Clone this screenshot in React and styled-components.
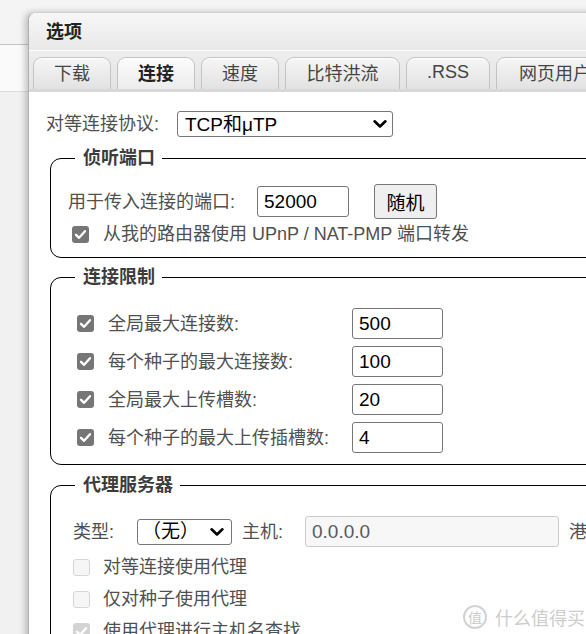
import React from "react";
import styled, { createGlobalStyle } from "styled-components";

const GlobalStyle = createGlobalStyle`
  html, body {
    margin: 0;
    padding: 0;
  }
  body {
    font-family: "Liberation Sans", "Noto Sans CJK SC", sans-serif;
    background: #f3f3f3;
  }
`;

const Page = styled.div`
  position: relative;
  width: 586px;
  height: 634px;
  overflow: hidden;
  box-sizing: border-box;
  padding: 12px 0 0 28px;
  background: linear-gradient(
      to bottom,
      #f4f4f4 44px,
      #c4c4c4 44px,
      #c4c4c4 45px,
      #fafafa 45px,
      #fafafa 91px,
      #dcdcdc 91px,
      #dcdcdc 92px,
      #f1f1f1 92px
    );
`;

const Dialog = styled.div`
  width: 620px;
  height: 700px;
  background: #fff;
  border-left: 1px solid #b0b0b0;
  border-top: 1px solid #cfcfcf;
  border-top-left-radius: 8px;
  box-shadow: -3px 0 6px rgba(0, 0, 0, 0.22);
  overflow: hidden;
`;

const TitleBar = styled.div`
  height: 38px;
  box-sizing: border-box;
  display: flex;
  align-items: center;
  padding: 0 0 4px 17px;
  background: linear-gradient(to bottom, #f7f7f7, #e8e8e8);
  border-bottom: 1px solid #fff;
  font-size: 18px;
  font-weight: bold;
  color: #222;
`;

const TabStrip = styled.div`
  height: 32px;
  display: flex;
  align-items: flex-end;
  gap: 6px;
  padding: 6px 0 0 4px;
  background: linear-gradient(to bottom, #eeeeee, #e3e3e3);
  border-bottom: 3px solid #d8d8d8;
`;

const Tab = styled.div`
  flex: none;
  width: ${(p) => p.$w}px;
  height: 32px;
  box-sizing: border-box;
  display: flex;
  align-items: center;
  justify-content: center;
  padding-bottom: 3px;
  border: 1px solid #c3c3c3;
  border-bottom: none;
  border-radius: 9px 9px 0 0;
  background: ${(p) =>
    p.$active
      ? "linear-gradient(to bottom, #fcfcfc, #ececec)"
      : "linear-gradient(to bottom, #f6f6f6, #e2e2e2)"};
  box-shadow: inset 0 1px 0 #fff;
  font-size: 18px;
  font-weight: ${(p) => (p.$active ? "bold" : "normal")};
  color: ${(p) => (p.$active ? "#222" : "#444")};
  white-space: nowrap;
  overflow: hidden;
`;

const Content = styled.div`
  padding: 19px 0 0 17px;
`;

const Row = styled.div`
  display: flex;
  align-items: center;
  height: ${(p) => p.$h || 31}px;
  margin-top: ${(p) => p.$mt || 0}px;
  padding-left: ${(p) => p.$pl || 0}px;
`;

const Label = styled.span`
  flex: none;
  width: ${(p) => (p.$w ? `${p.$w}px` : "auto")};
  font-size: 18px;
  line-height: 22px;
  color: #505050;
  white-space: nowrap;
`;

const SelectWrap = styled.span`
  position: relative;
  flex: none;
  display: inline-block;
  width: ${(p) => p.$w}px;
  height: 26px;
  margin-right: ${(p) => p.$mr || 0}px;
`;

const Select = styled.select`
  appearance: none;
  width: 100%;
  height: 100%;
  box-sizing: border-box;
  border: 1px solid #767676;
  border-radius: 3px;
  background: #fff;
  padding: 0 0 0 ${(p) => p.$pl || 7}px;
  font-family: "Liberation Sans", "Noto Sans CJK SC", sans-serif;
  font-size: 19px;
  color: #000;
  outline: none;
`;

const Chevron = styled.svg`
  position: absolute;
  right: ${(p) => p.$r}px;
  top: 50%;
  transform: translateY(-50%);
  pointer-events: none;
`;

const TextInput = styled.input`
  flex: none;
  width: ${(p) => p.$w}px;
  height: 31px;
  box-sizing: border-box;
  margin-right: ${(p) => p.$mr || 0}px;
  padding: 0 0 0 6px;
  border: 1px solid ${(p) => (p.disabled ? "#cbcbcb" : "#767676")};
  border-radius: 3px;
  background: ${(p) => (p.disabled ? "#f7f7f7" : "#fff")};
  font-family: "Liberation Sans", "Noto Sans CJK SC", sans-serif;
  font-size: 19px;
  color: ${(p) => (p.disabled ? "#5a5a5a" : "#000")};
  outline: none;
`;

const Button = styled.button`
  flex: none;
  width: 63px;
  height: 35px;
  padding: 0;
  border: 1px solid #767676;
  border-radius: 3px;
  background: #efefef;
  font-family: "Liberation Sans", "Noto Sans CJK SC", sans-serif;
  font-size: 19px;
  color: #000;
`;

const Group = styled.fieldset`
  width: 640px;
  box-sizing: border-box;
  margin: ${(p) => p.$mt}px 0 0 4px;
  padding: ${(p) => p.$pt}px 0 11px 17px;
  border: 1px solid #000;
  border-radius: 11px;
  min-width: 0;
`;

const Legend = styled.legend`
  margin-left: 7px;
  padding: 0 7px 0 8px;
  font-size: 18px;
  line-height: 22px;
  font-weight: bold;
  color: #3c3c3c;
`;

const LimitGrid = styled.div`
  display: grid;
  grid-template-columns: 17px 230px 91px;
  grid-auto-rows: 31px;
  column-gap: 14px;
  row-gap: 7px;
  align-items: center;
  padding-left: 9px;
`;

const Box = styled.span`
  flex: none;
  width: 17px;
  height: 17px;
  box-sizing: border-box;
  display: inline-flex;
  align-items: center;
  justify-content: center;
  border-radius: 3px;
  margin: ${(p) => p.$m || "0"};
  background: ${(p) =>
    p.$checked ? (p.$disabled ? "#d3d3d3" : "#767676") : "#f6f6f6"};
  border: ${(p) => (p.$checked ? "none" : "1px solid #d6d6d6")};
`;

const Watermark = styled.div`
  position: absolute;
  left: 463px;
  top: 605px;
  display: flex;
  align-items: center;
  gap: 8px;
  color: #cdcdcd;
  font-family: "Noto Sans CJK SC", sans-serif;
  font-size: 18px;
  line-height: 22px;
  text-shadow: 0 0 2px #fff;
`;

const Seal = styled.span`
  width: 20px;
  height: 20px;
  border: 2px solid #d2d2d2;
  border-radius: 50%;
  display: inline-flex;
  align-items: center;
  justify-content: center;
  font-size: 14px;
`;

const Check = ({ checked, disabled, m }) => (
  <Box $checked={checked} $disabled={disabled} $m={m}>
    {checked && (
      <svg width="13" height="13" viewBox="0 0 13 13">
        <path
          d="M2 6.8 L5.1 9.8 L11 3.2"
          fill="none"
          stroke="#fff"
          strokeWidth="2.3"
          strokeLinecap="round"
          strokeLinejoin="round"
        />
      </svg>
    )}
  </Box>
);

const Dropdown = ({ w, value, options, pl, r, mr }) => (
  <SelectWrap $w={w} $mr={mr}>
    <Select defaultValue={value} $pl={pl}>
      {options.map((o) => (
        <option key={o}>{o}</option>
      ))}
    </Select>
    <Chevron $r={r} width="14" height="9" viewBox="0 0 14 9">
      <path
        d="M1.6 1.8 L7 7 L12.4 1.8"
        fill="none"
        stroke="#000"
        strokeWidth="2.6"
        strokeLinecap="round"
        strokeLinejoin="round"
      />
    </Chevron>
  </SelectWrap>
);

const tabs = [
  { label: "下载", w: 78 },
  { label: "连接", w: 78, active: true },
  { label: "速度", w: 78 },
  { label: "比特洪流", w: 115 },
  { label: ".RSS", w: 84 },
  { label: "网页用户界面", w: 154 },
];

const limits = [
  { label: "全局最大连接数:", value: "500" },
  { label: "每个种子的最大连接数:", value: "100" },
  { label: "全局最大上传槽数:", value: "20" },
  { label: "每个种子的最大上传插槽数:", value: "4" },
];

export default function App() {
  return (
    <Page>
      <GlobalStyle />
      <Dialog>
        <TitleBar>选项</TitleBar>
        <TabStrip>
          {tabs.map((t) => (
            <Tab key={t.label} $w={t.w} $active={t.active}>
              {t.label}
            </Tab>
          ))}
        </TabStrip>
        <Content>
          <Row $h={26}>
            <Label $w={131}>对等连接协议:</Label>
            <Dropdown
              w={216}
              value="TCP和μTP"
              options={["TCP和μTP", "TCP", "μTP"]}
              r={6}
            />
          </Row>

          <Group $mt={10} $pt={15}>
            <Legend>侦听端口</Legend>
            <Row $h={35}>
              <Label $w={189}>用于传入连接的端口:</Label>
              <TextInput $w={92} $mr={25} defaultValue="52000" />
              <Button>随机</Button>
            </Row>
            <Row $h={24} $mt={3} $pl={4}>
              <Check checked m="0 14px 0 0" />
              <Label>从我的路由器使用 UPnP / NAT-PMP 端口转发</Label>
            </Row>
          </Group>

          <Group $mt={8} $pt={20}>
            <Legend>连接限制</Legend>
            <LimitGrid>
              {limits.map((l) => (
                <React.Fragment key={l.label}>
                  <Check checked />
                  <Label>{l.label}</Label>
                  <TextInput $w={91} defaultValue={l.value} />
                </React.Fragment>
              ))}
            </LimitGrid>
          </Group>

          <Group $mt={9} $pt={20}>
            <Legend>代理服务器</Legend>
            <Row $pl={5}>
              <Label $w={64}>类型:</Label>
              <Dropdown
                w={95}
                value="（无）"
                options={["（无）", "HTTP", "SOCKS5", "SOCKS4"]}
                pl={4}
                r={8}
                mr={10}
              />
              <Label $w={63}>主机:</Label>
              <TextInput $w={254} $mr={10} disabled defaultValue="0.0.0.0" />
              <Label>港口:</Label>
            </Row>
            <Row $h={32} $mt={4} $pl={5}>
              <Check m="0 13px 0 0" />
              <Label>对等连接使用代理</Label>
            </Row>
            <Row $h={32} $pl={5}>
              <Check m="0 13px 0 0" />
              <Label>仅对种子使用代理</Label>
            </Row>
            <Row $h={32} $pl={5}>
              <Check checked disabled m="0 13px 0 0" />
              <Label>使用代理进行主机名查找</Label>
            </Row>
          </Group>
        </Content>
      </Dialog>
      <Watermark>
        <Seal>值</Seal>
        <span>什么值得买</span>
      </Watermark>
    </Page>
  );
}
